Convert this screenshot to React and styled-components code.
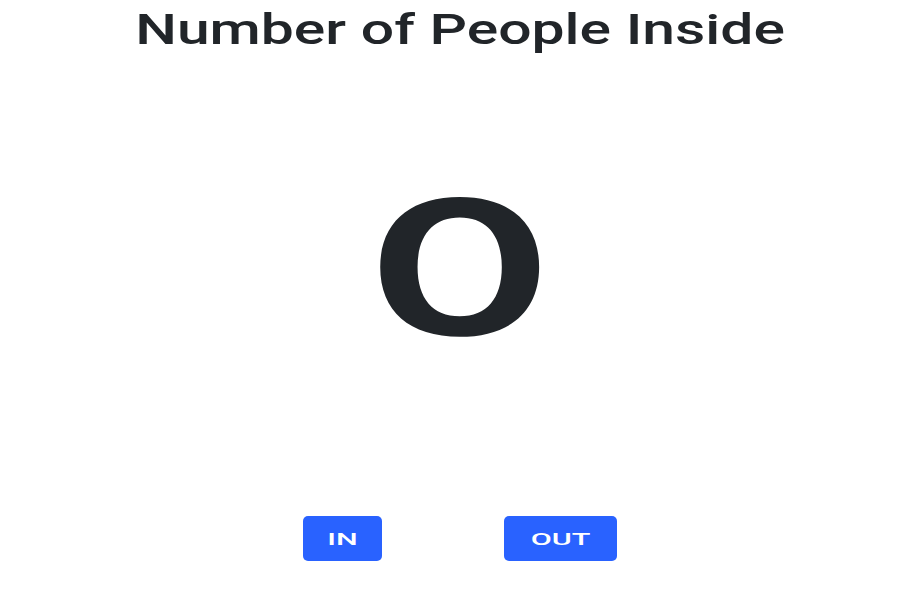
import React, { useState } from 'react';
import styled, { createGlobalStyle } from 'styled-components';

const GlobalStyle = createGlobalStyle`
    body {
        margin: 0;
        background: #fff;
        font-family: Roboto, 'Liberation Sans', Arial, sans-serif;
        color: #212529;
    }
`;

const Page = styled.div`
    display: flex;
    flex-flow: column nowrap;
    align-items: center;
    box-sizing: border-box;
    height: 600px;
    padding-left: 20px;
`;

const Title = styled.h1`
    margin: 8px 0 0;
    font-size: 42px;
    font-weight: 500;
    line-height: 44px;
    transform: scaleX(1.4);
`;

const Count = styled.div`
    margin-top: 115px;
    font-family: Inter, Roboto, sans-serif;
    font-weight: 600;
    font-size: 187px;
    line-height: 200px;
    transform: scaleX(1.52);
`;

const Buttons = styled.div`
    display: flex;
    gap: 122px;
    margin-top: auto;
    margin-bottom: 39px;
`;

const Button = styled.button`
    width: ${props => props.width}px;
    height: 45px;
    padding: 0;
    background: #2962ff;
    color: #fff;
    border: none;
    border-radius: 5px;
    font-family: Roboto, 'Liberation Sans', Arial, sans-serif;
    font-size: 17px;
    font-weight: 500;
    cursor: pointer;

    span {
        display: inline-block;
        transform: scaleX(1.8);
    }
`;

export default function App() {
    const [count, setCount] = useState(0);
    return (
        <Page>
            <GlobalStyle />
            <Title>Number of People Inside</Title>
            <Count>{count}</Count>
            <Buttons>
                <Button width={79} onClick={() => setCount(count + 1)}><span>IN</span></Button>
                <Button width={113} onClick={() => setCount(Math.max(0, count - 1))}><span>OUT</span></Button>
            </Buttons>
        </Page>
    );
}
